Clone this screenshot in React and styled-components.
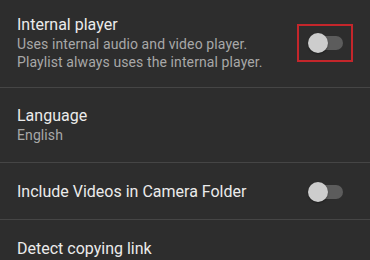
import React, { useState } from 'react'
import styled, { createGlobalStyle } from 'styled-components'

const GlobalStyle = createGlobalStyle`
  html, body {
    margin: 0;
    padding: 0;
    background: #2d2d2d;
  }
  body {
    font-family: Roboto, "Noto Sans", sans-serif;
  }
`;

const List = styled.div`
  display: flex;
  flex-direction: column;
  width: 370px;
  height: 260px;
  overflow: hidden;
  background: #2d2d2d;
`;

const Row = styled.div`
  display: flex;
  align-items: center;
  justify-content: space-between;
  padding: ${({ $top }) => $top ?? 18}px 17px ${({ $bottom }) => $bottom ?? 18}px;
  border-bottom: 1px solid #454545;
  flex-shrink: 0;
`;

const Texts = styled.div`
  display: flex;
  flex-direction: column;
`;

const Title = styled.div`
  font-size: 16px;
  line-height: 20px;
  color: #ebebeb;
`;

const Summary = styled.div`
  font-size: 14px;
  line-height: 18px;
  letter-spacing: 0.1px;
  color: #a8a8a8;
`;

const Highlight = styled.div`
  display: flex;
  align-items: center;
  justify-content: center;
  width: 56px;
  height: 38px;
  box-sizing: border-box;
  border: 2px solid #c4262b;
`;

const SwitchSlot = styled.div`
  display: flex;
  align-items: center;
  justify-content: center;
  width: 56px;
`;

const Track = styled.div`
  position: relative;
  width: 33px;
  height: 14px;
  margin-left: 2px;
  border-radius: 7px;
  background: #5c5c5c;
  cursor: pointer;
`;

const Thumb = styled.div`
  position: absolute;
  top: -3px;
  left: ${({ $on }) => ($on ? '14px' : '-2px')};
  width: 20px;
  height: 20px;
  border-radius: 50%;
  background: #cdcdcd;
  box-shadow: 0 1px 2px rgba(0, 0, 0, 0.4);
`;

const Switch = ({ on, onToggle }) => (
  <Track onClick={onToggle}>
    <Thumb $on={on} />
  </Track>
);

export default function App() {
  const [internal, setInternal] = useState(false);
  const [camera, setCamera] = useState(false);

  return (
    <>
      <GlobalStyle />
      <List>
        <Row $top={15} $bottom={16}>
          <Texts>
            <Title>Internal player</Title>
            <Summary>Uses internal audio and video player.</Summary>
            <Summary>Playlist always uses the internal player.</Summary>
          </Texts>
          <Highlight>
            <Switch on={internal} onToggle={() => setInternal(!internal)} />
          </Highlight>
        </Row>
        <Row>
          <Texts>
            <Title>Language</Title>
            <Summary>English</Summary>
          </Texts>
        </Row>
        <Row $top={19} $bottom={17}>
          <Texts>
            <Title>Include Videos in Camera Folder</Title>
          </Texts>
          <SwitchSlot>
            <Switch on={camera} onToggle={() => setCamera(!camera)} />
          </SwitchSlot>
        </Row>
        <Row $top={19}>
          <Texts>
            <Title>Detect copying link</Title>
          </Texts>
        </Row>
      </List>
    </>
  )
}
